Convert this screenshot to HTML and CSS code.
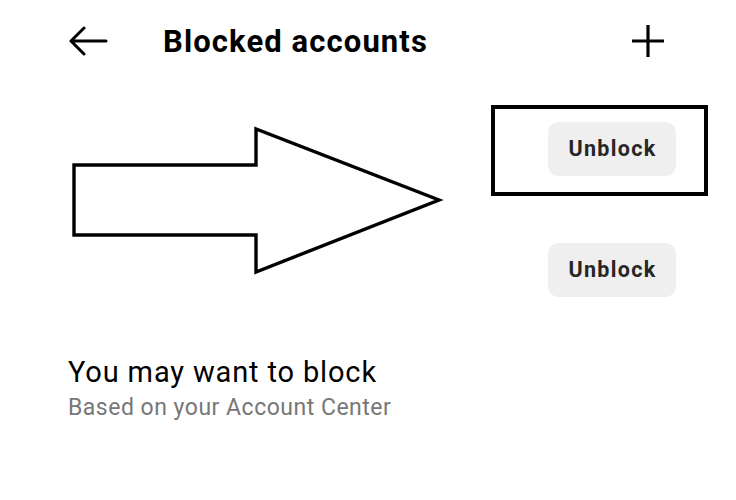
FILE: index.html
```html
<!DOCTYPE html>
<html>
<head>
<meta charset="utf-8">
<link rel="stylesheet" href="styles.css">
</head>
<body>
<div class="screen">
  <header class="topbar">
    <svg class="back" width="40" height="30" viewBox="0 0 40 30"><path d="M38 15H3M16 2L3 15l13 13" fill="none" stroke="#000" stroke-width="3" stroke-linecap="round" stroke-linejoin="round"/></svg>
    <h1 class="title">Blocked accounts</h1>
    <svg class="plus" width="36" height="36" viewBox="0 0 36 36"><path d="M18 2v32M2 18h32" stroke="#000" stroke-width="3.2"/></svg>
  </header>
  <div class="list">
    <div class="row"><button class="unblock">Unblock</button></div>
    <div class="row"><button class="unblock">Unblock</button></div>
  </div>
  <section class="suggest">
    <div class="suggest-title">You may want to block</div>
    <div class="suggest-sub">Based on your Account Center</div>
  </section>
  <svg class="annot-arrow" width="380" height="150" viewBox="0 0 380 150"><path d="M4 40H186V4L369 75L186 147V110H4Z" fill="none" stroke="#000" stroke-width="3.4" stroke-linejoin="miter"/></svg>
  <div class="annot-box"></div>
</div>
</body>
</html>
```
FILE: styles.css
```css
html, body { margin: 0; padding: 0; background: #fff; }
.screen { position: relative; width: 736px; height: 500px; overflow: hidden; font-family: Roboto, "Liberation Sans", sans-serif; color: #000; }
.topbar { display: flex; align-items: center; height: 82px; padding: 0 70px 0 68px; }
.back { flex: none; }
.title { margin: 0 0 0 55px; font-size: 31px; font-weight: 700; flex: 1; letter-spacing: 1.1px; }
.plus { flex: none; }
.list { display: flex; flex-direction: column; padding: 6px 60px 0 0; }
.row { height: 121px; display: flex; align-items: center; justify-content: flex-end; }
.unblock { width: 128px; height: 54px; border: none; border-radius: 11px; background: #efefef; font-family: Roboto, "Liberation Sans", sans-serif; font-weight: 700; font-size: 21.5px; letter-spacing: 1.3px; color: #262626; padding: 0 0 0 1px; }
.suggest { padding: 25px 0 0 68px; }
.suggest-title { font-size: 29px; line-height: 34px; color: #000; letter-spacing: 0.85px; }
.suggest-sub { font-size: 23px; line-height: 28px; color: #777; margin-top: 5px; letter-spacing: 0.5px; }
.annot-arrow { position: absolute; left: 70px; top: 125px; }
.annot-box { position: absolute; left: 491px; top: 105px; width: 209px; height: 83px; border: 4px solid #000; }
```
